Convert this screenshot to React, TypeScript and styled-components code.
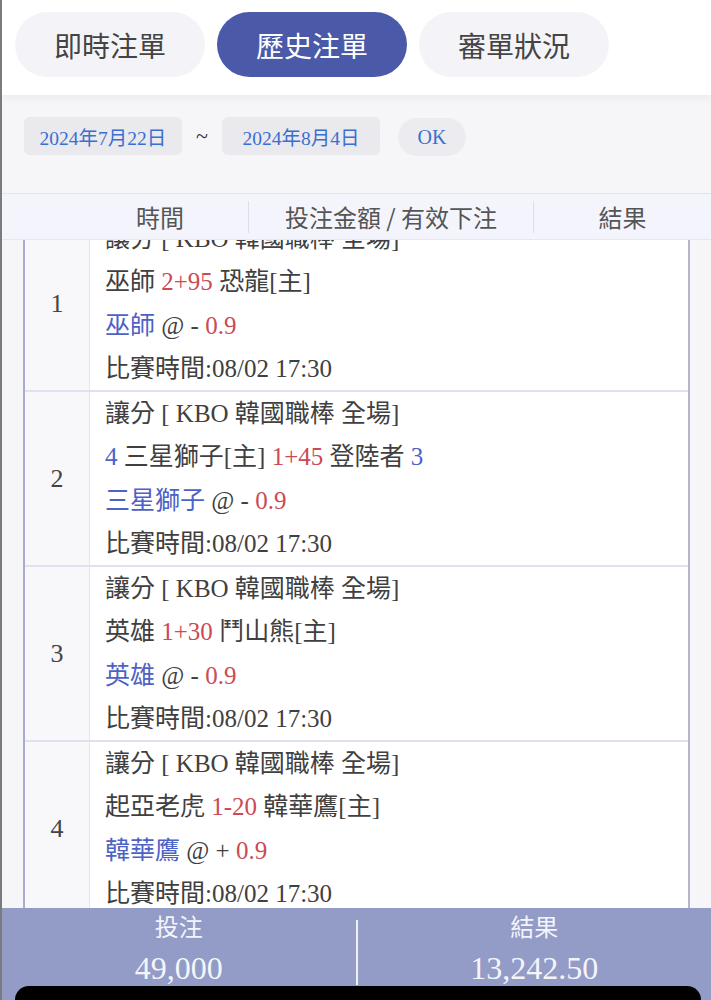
import React from 'react';
import styled, { createGlobalStyle } from 'styled-components';

const GlobalStyle = createGlobalStyle`
  html, body {
    margin: 0;
    padding: 0;
    background: #f6f6f8;
  }
  * {
    box-sizing: border-box;
  }
`;

const SANS = `"Noto Sans CJK TC", "Noto Sans", sans-serif`;
const MIXED = `"Liberation Serif", "Noto Sans CJK TC", serif`;

type Part = { text: string; tone?: 'red' | 'blue' };

interface IBet {
  id: number;
  lines: Part[][];
}

const league: Part[] = [{ text: '讓分 [ KBO 韓國職棒 全場]' }];
const matchTime: Part[] = [{ text: '比賽時間:08/02 17:30' }];

const bets: IBet[] = [
  {
    id: 1,
    lines: [
      league,
      [{ text: '巫師 ' }, { text: '2+95', tone: 'red' }, { text: ' 恐龍[主]' }],
      [{ text: '巫師', tone: 'blue' }, { text: ' @ - ' }, { text: '0.9', tone: 'red' }],
      matchTime,
    ],
  },
  {
    id: 2,
    lines: [
      league,
      [
        { text: '4', tone: 'blue' },
        { text: ' 三星獅子[主] ' },
        { text: '1+45', tone: 'red' },
        { text: ' 登陸者 ' },
        { text: '3', tone: 'blue' },
      ],
      [{ text: '三星獅子', tone: 'blue' }, { text: ' @ - ' }, { text: '0.9', tone: 'red' }],
      matchTime,
    ],
  },
  {
    id: 3,
    lines: [
      league,
      [{ text: '英雄 ' }, { text: '1+30', tone: 'red' }, { text: ' 鬥山熊[主]' }],
      [{ text: '英雄', tone: 'blue' }, { text: ' @ - ' }, { text: '0.9', tone: 'red' }],
      matchTime,
    ],
  },
  {
    id: 4,
    lines: [
      league,
      [{ text: '起亞老虎 ' }, { text: '1-20', tone: 'red' }, { text: ' 韓華鷹[主]' }],
      [{ text: '韓華鷹', tone: 'blue' }, { text: ' @ + ' }, { text: '0.9', tone: 'red' }],
      matchTime,
    ],
  },
];

const App: React.FC = () => {
  return (
    <>
      <GlobalStyle />
      <Page>
        <TabBar>
          <Tab>即時注單</Tab>
          <Tab $active>歷史注單</Tab>
          <Tab>審單狀況</Tab>
        </TabBar>

        <FilterRow>
          <DatePill>2024年7月22日</DatePill>
          <Tilde>~</Tilde>
          <DatePill>2024年8月4日</DatePill>
          <OkButton>OK</OkButton>
        </FilterRow>

        <HeaderRow>
          <HeaderCell>時間</HeaderCell>
          <HeaderCell $divided>投注金額 / 有效下注</HeaderCell>
          <HeaderCell $divided>結果</HeaderCell>
        </HeaderRow>

        {/* list is scrolled a little, first row sits partly under the header */}
        <ListViewport>
          <List>
            {bets.map((bet) => (
              <BetRow key={bet.id}>
                <IndexCell>{bet.id}</IndexCell>
                <BetBody>
                  {bet.lines.map((line, i) => (
                    <BetLine key={i}>
                      {line.map((part, j) => (
                        <Chunk key={j} $tone={part.tone}>
                          {part.text}
                        </Chunk>
                      ))}
                    </BetLine>
                  ))}
                </BetBody>
              </BetRow>
            ))}
          </List>
        </ListViewport>

        <Footer>
          <Stat>
            <StatLabel>投注</StatLabel>
            <StatValue>49,000</StatValue>
          </Stat>
          <StatDivider />
          <Stat>
            <StatLabel>結果</StatLabel>
            <StatValue>13,242.50</StatValue>
          </Stat>
          <HomeBar />
        </Footer>
      </Page>
    </>
  );
};

const Page = styled.div`
  height: 1000px;
  display: flex;
  flex-direction: column;
  overflow: hidden;
  border-left: 2px solid rgba(40, 40, 50, 0.6);
  background: #f6f6f8;
`;

const TabBar = styled.div`
  height: 95px;
  flex-shrink: 0;
  display: flex;
  gap: 12px;
  padding: 12px 13px 0;
  background: #ffffff;
  box-shadow: 0 3px 8px rgba(0, 0, 0, 0.05);
  position: relative;
  z-index: 1;
`;

const Tab = styled.div<{ $active?: boolean }>`
  width: 190px;
  height: 65px;
  border-radius: 33px;
  display: flex;
  align-items: center;
  justify-content: center;
  font-family: ${SANS};
  font-size: 28px;
  color: ${(p) => (p.$active ? '#ffffff' : '#444444')};
  background: ${(p) => (p.$active ? '#4b59a9' : '#f4f4f8')};
`;

const FilterRow = styled.div`
  height: 98px;
  flex-shrink: 0;
  display: flex;
  align-items: flex-start;
  padding: 22px 0 0 22px;
`;

const DatePill = styled.div`
  width: 158px;
  height: 38px;
  display: flex;
  align-items: center;
  justify-content: center;
  border-radius: 6px;
  background: #e9e9ee;
  color: #3a6fd0;
  font-family: ${MIXED};
  font-size: 19.5px;
`;

const Tilde = styled.div`
  width: 40px;
  height: 38px;
  display: flex;
  align-items: center;
  justify-content: center;
  font-family: ${MIXED};
  font-size: 22px;
  color: #333333;
`;

const OkButton = styled.div`
  margin-left: 18px;
  margin-top: 1px;
  width: 68px;
  height: 38px;
  border-radius: 19px;
  display: flex;
  align-items: center;
  justify-content: center;
  background: #ececf0;
  color: #3a6fd0;
  font-family: ${MIXED};
  font-size: 20px;
`;

const HeaderRow = styled.div`
  height: 47px;
  flex-shrink: 0;
  display: grid;
  grid-template-columns: 176px 285px 1fr;
  align-items: center;
  padding-left: 70px;
  background: #f4f5fc;
  border-top: 1px solid #e3e4ee;
  border-bottom: 1px solid #e6e7f0;
  position: relative;
  z-index: 1;
`;

const HeaderCell = styled.div<{ $divided?: boolean }>`
  height: 32px;
  display: flex;
  align-items: center;
  justify-content: center;
  font-family: ${SANS};
  font-size: 24px;
  color: #555555;
  border-left: ${(p) => (p.$divided ? '1px solid #dedfe6' : 'none')};
`;

const ListViewport = styled.div`
  flex: 1;
  overflow: hidden;
  padding: 0 21px 0 21px;
`;

const List = styled.div`
  margin-top: -23px;
  border-left: 2px solid #a9acd0;
  border-right: 2px solid #b4b6cc;
  background: #ffffff;
`;

const BetRow = styled.div`
  height: 175px;
  display: flex;
  border-bottom: 2px solid #dfe1ee;
`;

const IndexCell = styled.div`
  width: 65px;
  flex-shrink: 0;
  display: flex;
  align-items: center;
  justify-content: center;
  background: #f8f8fb;
  border-right: 1px solid #e4e5ee;
  font-family: ${MIXED};
  font-size: 26px;
  color: #444444;
`;

const BetBody = styled.div`
  flex: 1;
  padding-left: 15px;
  display: flex;
  flex-direction: column;
  justify-content: center;
`;

const BetLine = styled.div`
  height: 43.5px;
  line-height: 43.5px;
  white-space: nowrap;
  font-family: ${MIXED};
  font-size: 25px;
  color: #404040;
`;

const Chunk = styled.span<{ $tone?: 'red' | 'blue' }>`
  white-space: pre;
  color: ${(p) =>
    p.$tone === 'red' ? '#cc4a55' : p.$tone === 'blue' ? '#4d62c6' : 'inherit'};
`;

const Footer = styled.div`
  height: 92px;
  flex-shrink: 0;
  display: grid;
  grid-template-columns: 1fr 2px 1fr;
  background: #939bc7;
  position: relative;
`;

const Stat = styled.div`
  display: flex;
  flex-direction: column;
  align-items: center;
  color: #f4f5fb;
`;

const StatLabel = styled.div`
  height: 38px;
  padding-top: 2px;
  font-family: ${SANS};
  font-size: 24px;
  line-height: 32px;
`;

const StatValue = styled.div`
  font-family: ${MIXED};
  font-size: 32px;
  line-height: 44px;
`;

const StatDivider = styled.div`
  margin: 12px 0 15px;
  background: rgba(255, 255, 255, 0.85);
`;

const HomeBar = styled.div`
  position: absolute;
  left: 13px;
  right: 10px;
  bottom: 0;
  height: 14px;
  background: #000000;
  border-radius: 24px 24px 0 0;
`;

export default App;
